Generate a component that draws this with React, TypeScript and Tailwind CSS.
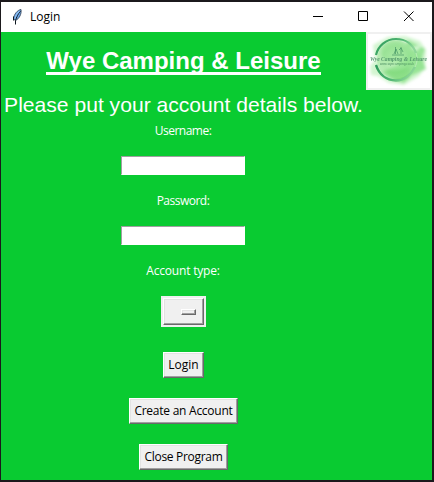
import React from "react";

const ui = "font-['Open_Sans','Noto_Sans',sans-serif] text-[12px] leading-[20px] whitespace-nowrap";
const raised =
  "border border-t-white border-l-white border-r-[#696969] border-b-[#696969] bg-[#f0f0f0] shadow-[inset_-1px_-1px_0_#a0a0a0,inset_1px_1px_0_#e3e3e3]";

function Feather() {
  return (
    <svg className="ml-[10px] h-[18px] w-[12px]" viewBox="0 0 12 18">
      <path d="M10 1.5C6.500 2 3 6 2.5 11L4.500 12.500C8 11 10.800 6 10 1.500Z" fill="#6aa5e8" stroke="#3c4a5c" strokeWidth="0.9" />
      <path d="M9.500 3C7 6 5.500 9 4.500 12.500V16.500M2.500 8.500V12.500" fill="none" stroke="#101820" strokeWidth="1" />
      <path d="M8.500 3C6 5 4.500 8 4 10.500" fill="none" stroke="#8fc0f5" strokeWidth="1.200" />
    </svg>
  );
}

function Logo() {
  return (
    <svg className="h-[58px] w-[66px] shrink-0" viewBox="0 0 66 58">
      <defs>
        <filter id="soft" x="-20%" y="-20%" width="140%" height="140%">
          <feGaussianBlur stdDeviation="1.4" />
        </filter>
        <radialGradient id="wash">
          <stop offset="0" stopColor="#b5efae" />
          <stop offset="0.7" stopColor="#8fdf8b" />
          <stop offset="1" stopColor="#a0e59c" />
        </radialGradient>
        <linearGradient id="ring" x1="0" y1="0" x2="1" y2="0.3">
          <stop offset="0" stopColor="#2f9a5c" />
          <stop offset="0.6" stopColor="#4fb571" />
          <stop offset="1" stopColor="#8fd79a" />
        </linearGradient>
      </defs>
      <rect width="66" height="58" fill="#f0f0f0" />
      <rect x="2" y="2" width="62" height="54" fill="#fff" />
      <g filter="url(#soft)">
        <path d="M7 13L22 5L39 4L54 9L60 18L59 36L53 44L38 53L23 51L12 44L5 43L4 34L9 28Z" fill="#d3f5d0" />
        <path d="M42 8L59 17L56 26L60 37L45 44L38 51L25 47L16 40L31 33Z" fill="#96e494" />
        <ellipse cx="29" cy="20" rx="14" ry="11" fill="#a5e6a2" />
        <path d="M18 39L45 36L43 46L30 49Z" fill="#7cd978" />
        <path d="M43 16L57 13L50 19L60 22Z" fill="#d6f7d4" />
      </g>
      <circle cx="30" cy="27.5" r="19" fill="url(#wash)" opacity="0.5" />
      <path d="M10 23C12 14 20 7 30 7S47 13 50 21" fill="none" stroke="url(#ring)" strokeWidth="2.2" />
      <path d="M10 33C13 42 20 48.500 30 48.500C38 48.500 45 43 49 35" fill="none" stroke="url(#ring)" strokeWidth="2.400" />
      <path d="M50 21C52 26 51 31 49 35" fill="none" stroke="#bcecb9" strokeWidth="1" />
      <path d="M28 22L30 17L32 22M29.500 15V22M33 18L35 16L37 20M35 15V22M26 23H38" fill="none" stroke="#459565" strokeWidth="0.9" opacity="0.8" />
      <text x="4" y="29" textLength="57" lengthAdjust="spacingAndGlyphs" fontFamily="Liberation Serif, serif" fontStyle="italic" fontWeight="bold" fontSize="6.500" fill="#4d9068" opacity="0.9">
        Wye Camping &amp; Leisure
      </text>
      <text x="14" y="33" textLength="34" lengthAdjust="spacingAndGlyphs" fontFamily="Liberation Sans, sans-serif" fontSize="3" fill="#357a50" opacity="0.8">
        www.wyecamping.co.uk
      </text>
    </svg>
  );
}

function Field({ label, secret }: { label: string; secret?: boolean }) {
  return (
    <label className="flex h-[70px] w-[124px] flex-col items-center">
      <span className={`${ui} mb-[15px] tracking-[-0.5px] text-white`}>{label}</span>
      <input
        type={secret ? "password" : "text"}
        className="h-[19px] w-[124px] border border-t-[#a0a0a0] border-r-white border-b-white border-l-[#a0a0a0] bg-white px-1 text-xs outline-none"
      />
    </label>
  );
}

export default function App() {
  return (
    <div className="flex h-[482px] w-[434px] flex-col overflow-hidden border-t-2 border-r-2 border-b-2 border-l border-[#1b191c] bg-[#09cb31]">
      <header className="flex h-[30px] shrink-0 items-center bg-white">
        <Feather />
        <span className={`${ui} ml-[7px] text-black`}>Login</span>
        <svg className="ml-auto h-[30px] w-[138px]" viewBox="0 0 138 30" fill="none" stroke="#000" strokeWidth="1">
          <path d="M19 14.5H29" />
          <path d="M64.5 9.5H73.500V18.500H64.5Z" />
          <path d="M110 9.500L119.500 19M119.500 9.500L110 19" />
        </svg>
      </header>
      <div className="flex">
        <main className="flex w-[365px] flex-col items-center">
          <h1 className="flex h-[58px] items-center font-['Liberation_Sans',Arial,sans-serif] text-[24px] font-bold whitespace-nowrap text-white">
            <span className="h-[28px] border-b-[3px] border-white leading-[28px]">Wye Camping &amp; Leisure</span>
          </h1>
          <p className="h-[31px] pt-[2px] font-['Liberation_Sans',Arial,sans-serif] text-[21.1px] leading-[26px] whitespace-nowrap text-white">
            Please put your account details below.
          </p>
          <div className="flex flex-col pr-px">
            <Field label="Username:" />
            <Field label="Password:" secret />
          </div>
          <span className={`${ui} pr-px tracking-[-0.2px] text-white`}>Account type:</span>
          <button className="mt-[15px] h-[31px] w-[45px] bg-[#f0f0f0] p-[2px]" aria-label="Account type">
            <span className={`flex h-[27px] w-[41px] items-center justify-end pr-[7px] ${raised}`}>
              <span className={`h-[6px] w-[15px] ${raised}`} />
            </span>
          </button>
          <button className={`${ui} ${raised} mt-[25px] h-[26px] w-[41px]`}>Login</button>
          <button className={`${ui} ${raised} mt-[20px] h-[26px] w-[109px] tracking-[-0.25px]`}>Create an Account</button>
          <button className={`${ui} ${raised} mt-[20px] h-[26px] w-[89px] tracking-[-0.3px]`}>Close Program</button>
        </main>
        <Logo />
      </div>
    </div>
  );
}
